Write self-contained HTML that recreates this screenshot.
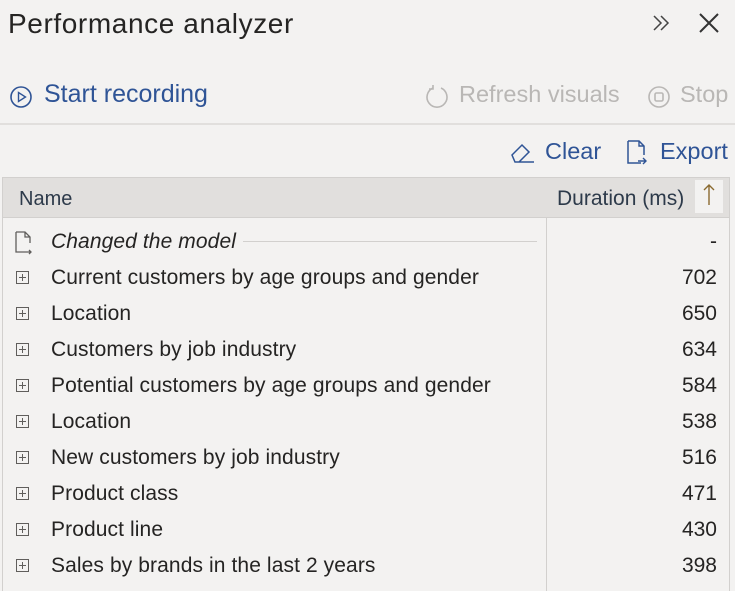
<!DOCTYPE html>
<html><head><style>
html{height:591px;overflow:hidden}
body{margin:0;width:735px;height:591px;background:#f3f2f1;font-family:"Liberation Sans",sans-serif;position:relative;overflow:hidden;color:#252423}
.a{position:absolute;white-space:nowrap}
.t{font-size:28px;left:8px;top:8px;color:#252423;letter-spacing:0.6px}
.blue{color:#2f5496}
.grey{color:#b9b7b5}
.tbl{position:absolute;left:2px;top:177px;width:728px;height:430px;border:1px solid #d2d0ce;box-sizing:border-box}
.hdr{position:absolute;left:0;top:0;right:0;height:39px;background:#e1dfdd;border-bottom:1px solid #d2d0ce}
.row{position:absolute;left:0;width:726px;height:36px;font-size:21px}
.row .n{position:absolute;left:48px;top:6px;letter-spacing:0.1px}
.row .v{position:absolute;right:12px;top:6px}
.pl{position:absolute;left:13px;top:11px;width:13px;height:13px;border:1px solid #605e5c;box-sizing:border-box}
.pl:before{content:"";position:absolute;left:2px;top:5px;width:7px;height:1px;background:#605e5c}
.pl:after{content:"";position:absolute;left:5px;top:2px;width:1px;height:7px;background:#605e5c}
</style></head><body>
<div class="a t">Performance analyzer</div>
<svg class="a" style="left:650px;top:12px" width="24" height="22"><path d="M4 4l7 7-7 7M11 4l7 7-7 7" stroke="#444" stroke-width="1.5" fill="none"/></svg>
<svg class="a" style="left:698px;top:12px" width="24" height="24"><path d="M2 2l18 18M20 2L2 20" stroke="#333" stroke-width="2" fill="none"/></svg>
<svg class="a" style="left:9px;top:85px" width="24" height="24"><circle cx="12" cy="12" r="10" stroke="#2f5496" stroke-width="1.6" fill="none"/><path d="M9.5 7.5v9l7-4.5z" stroke="#2f5496" stroke-width="1.4" fill="none"/></svg>
<div class="a blue" style="left:44px;top:80px;font-size:25px">Start recording</div>
<svg class="a" style="left:424px;top:84px" width="26" height="26"><path d="M9 4A10 10 0 1 0 17 4" stroke="#b9b7b5" stroke-width="1.6" fill="none"/><path d="M9 1v4h-4" stroke="#b9b7b5" stroke-width="1.6" fill="none"/></svg>
<div class="a grey" style="left:459px;top:81px;font-size:23.5px">Refresh visuals</div>
<svg class="a" style="left:647px;top:85px" width="24" height="24"><circle cx="12" cy="12" r="10" stroke="#b9b7b5" stroke-width="1.6" fill="none"/><rect x="8" y="8" width="8" height="8" rx="1.5" stroke="#b9b7b5" stroke-width="1.6" fill="none"/></svg>
<div class="a grey" style="left:680px;top:81px;font-size:23.5px">Stop</div>
<div class="a" style="left:0;top:123px;width:735px;height:2px;background:#e1dfdd"></div>
<svg class="a" style="left:509px;top:141px" width="30" height="24"><path d="M3 14l10-10 7 7-10 10h-4zM7 21h18" stroke="#2f5496" stroke-width="1.5" fill="none"/></svg>
<div class="a blue" style="left:545px;top:138px;font-size:23.5px">Clear</div>
<svg class="a" style="left:624px;top:139px" width="28" height="28"><path d="M4 2h11l5 5v9M4 2v22h13" stroke="#2f5496" stroke-width="1.5" fill="none"/><path d="M15 2v5h5M14 22h8M19 19l3 3-3 3" stroke="#2f5496" stroke-width="1.4" fill="none"/></svg>
<div class="a blue" style="left:660px;top:138px;font-size:23.5px">Export</div>
<div class="tbl">
<div class="hdr"><div class="a" style="left:16px;top:10px;font-size:20px;color:#2d3a4a">Name</div><div class="a" style="left:554px;top:9px;font-size:21px;color:#2d3a4a">Duration (ms)</div><div class="a" style="left:692px;top:2px;width:28px;height:33px;background:#f3f2f1"><svg width="28" height="33"><path d="M14 5v20M9 10l5-5 5 5" stroke="#8a6a30" stroke-width="1.4" fill="none"/></svg></div></div>
<div class="a" style="left:543px;top:39px;width:1px;height:400px;background:#d2d0ce"></div>
<div class="row" style="top:46px"><svg class="a" style="left:11px;top:7px" width="22" height="24"><path d="M2 1h9l5 5v6M2 1v20h8M11 1v5h5M10 21h7M15 19l2 2-2 2" stroke="#605e5c" stroke-width="1.3" fill="none"/></svg><div class="n" style="font-style:italic">Changed the model</div><div class="a" style="left:240px;top:17px;width:294px;height:1px;background:#d2d0ce"></div><div class="v">-</div></div>
<div class="row" style="top:82px"><div class="pl"></div><div class="n">Current customers by age groups and gender</div><div class="v">702</div></div>
<div class="row" style="top:118px"><div class="pl"></div><div class="n">Location</div><div class="v">650</div></div>
<div class="row" style="top:154px"><div class="pl"></div><div class="n">Customers by job industry</div><div class="v">634</div></div>
<div class="row" style="top:190px"><div class="pl"></div><div class="n">Potential customers by age groups and gender</div><div class="v">584</div></div>
<div class="row" style="top:226px"><div class="pl"></div><div class="n">Location</div><div class="v">538</div></div>
<div class="row" style="top:262px"><div class="pl"></div><div class="n">New customers by job industry</div><div class="v">516</div></div>
<div class="row" style="top:298px"><div class="pl"></div><div class="n">Product class</div><div class="v">471</div></div>
<div class="row" style="top:334px"><div class="pl"></div><div class="n">Product line</div><div class="v">430</div></div>
<div class="row" style="top:370px"><div class="pl"></div><div class="n">Sales by brands in the last 2 years</div><div class="v">398</div></div>
</div>
</body></html>
